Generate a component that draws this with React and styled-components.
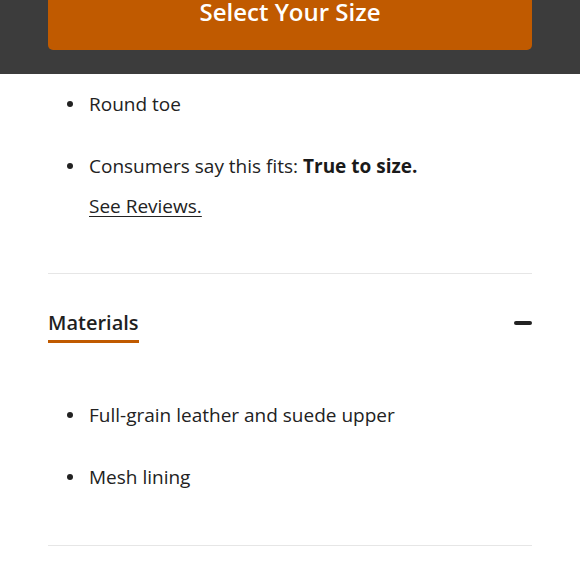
import styled, { createGlobalStyle } from "styled-components";

const GlobalStyle = createGlobalStyle`
  body {
    margin: 0;
    background: #ffffff;
    font-family: "Open Sans", "Liberation Sans", sans-serif;
    color: #222222;
  }
`;

const fitDetails = [
  { id: "toe", text: "Round toe" },
  { id: "fit", text: "Consumers say this fits: ", strong: "True to size.", link: "See Reviews." },
];

const materials = ["Full-grain leather and suede upper", "Mesh lining"];

export default function App() {
  return (
    <>
      <GlobalStyle />
      <StickyBar>
        <SizeButton type="button">Select Your Size</SizeButton>
      </StickyBar>
      <Page>
        <BulletList>
          {fitDetails.map((item) => (
            <Bullet key={item.id}>
              {item.text}
              {item.strong && <Strong>{item.strong}</Strong>}
              {item.link && (
                <>
                  <br />
                  <ReviewLink href="#reviews">{item.link}</ReviewLink>
                </>
              )}
            </Bullet>
          ))}
        </BulletList>
        <Divider />
        <Section>
          <SectionHeader>
            <SectionTitle>Materials</SectionTitle>
            <Minus aria-label="Collapse" />
          </SectionHeader>
          <BulletList $top={52}>
            {materials.map((m) => (
              <Bullet key={m}>{m}</Bullet>
            ))}
          </BulletList>
        </Section>
        <Divider />
      </Page>
    </>
  );
}

// sticky "add to bag" strip, the button is cut off by the top of the viewport
const StickyBar = styled.div`
  height: 74px;
  overflow: hidden;
  display: flex;
  align-items: flex-end;
  padding: 0 48px 24px;
  box-sizing: border-box;
  background-color: #3c3c3c;
`;

const SizeButton = styled.button`
  flex: 1;
  height: 78px;
  border: none;
  border-radius: 5px;
  background-color: #c05a00;
  color: #ffffff;
  font-family: inherit;
  font-size: 24px;
  font-weight: 600;
  cursor: pointer;
`;

const Page = styled.main`
  padding: 10px 48px 0;
`;

const BulletList = styled.ul`
  margin: ${(props) => props.$top || 0}px 0 0;
  padding: 0 0 0 41px;
  list-style: none;
`;

// custom dot: the default disc sits too close to the text
const Bullet = styled.li`
  position: relative;
  font-size: 19px;
  line-height: 40px;
  margin-bottom: 22px;

  &:last-child {
    margin-bottom: 0;
  }

  &::before {
    content: "";
    position: absolute;
    left: -22px;
    top: 17px;
    width: 6px;
    height: 6px;
    border-radius: 50%;
    background-color: #222222;
  }
`;

const Strong = styled.strong`
  font-weight: 700;
  color: #1a1a1a;
`;

const ReviewLink = styled.a`
  color: #222222;
  text-decoration: underline;
  text-underline-offset: 3px;
  text-decoration-thickness: 1px;
`;

const Divider = styled.hr`
  margin: 47px 0 0;
  border: none;
  border-top: 1px solid #e6e6e6;
`;

const Section = styled.section`
  padding-top: 35px;
  padding-bottom: 1px;
`;

const SectionHeader = styled.div`
  display: flex;
  justify-content: space-between;
  align-items: flex-start;
`;

const SectionTitle = styled.h2`
  margin: 0;
  padding-bottom: 3px;
  border-bottom: 3px solid #c05a00;
  font-size: 20px;
  font-weight: 600;
  line-height: 28px;
  color: #1f1f1f;
`;

const Minus = styled.span`
  width: 18px;
  height: 4px;
  margin-top: 12px;
  border-radius: 2px;
  background-color: #222222;
`;
